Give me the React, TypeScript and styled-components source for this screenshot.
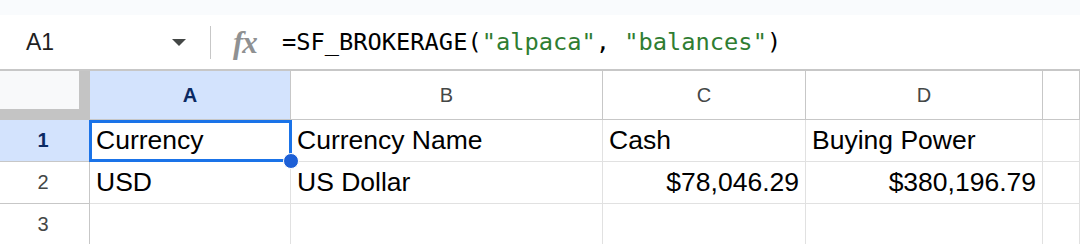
import React from 'react'
import styled, { createGlobalStyle } from 'styled-components'

const GlobalStyle = createGlobalStyle`
    html, body {
        margin: 0;
        padding: 0;
        background: #ffffff;
    }
    body {
        font-family: "Liberation Sans", Arial, sans-serif;
        overflow: hidden;
    }
`

const Page = styled.div`
    width: 1080px;
    height: 244px;
    overflow: hidden;
    background: #ffffff;
`

const TopStrip = styled.div`
    height: 15px;
    background: #f9fbfd;
`

const FormulaBar = styled.div`
    box-sizing: border-box;
    height: 56px;
    display: flex;
    align-items: center;
    border-bottom: 2px solid #c7c7c7;
    background: #ffffff;
`

const NameBox = styled.div`
    box-sizing: border-box;
    width: 186px;
    padding-left: 26px;
    display: flex;
    align-items: center;
    justify-content: space-between;
    font-size: 23px;
    color: #1f1f1f;
`

const Caret = styled.span`
    width: 0;
    height: 0;
    border-left: 7.5px solid transparent;
    border-right: 7.5px solid transparent;
    border-top: 7px solid #444746;
`

const Divider = styled.div`
    width: 1px;
    height: 33px;
    margin-left: 24px;
    background: #c7c7c7;
`

const FxIcon = styled.span`
    width: 30px;
    margin-left: 22px;
    font-family: "Liberation Serif", "Times New Roman", serif;
    font-style: italic;
    font-weight: 700;
    font-size: 31px;
    color: #8f9192;
    letter-spacing: -1px;
    line-height: 1;
`

const Formula = styled.div`
    margin-left: 19px;
    font-family: "DejaVu Sans Mono", "Liberation Mono", monospace;
    font-size: 23.7px;
    color: #000000;
    white-space: pre;
`

const Str = styled.span`
    color: #2f7d32;
`

const GridWrap = styled.div`
    position: relative;
`

const Grid = styled.div`
    display: grid;
    grid-template-columns: 90px 201px 312px 203px 237px 1fr;
    grid-template-rows: 49px 42px 42px 42px;
`

const Corner = styled.div`
    background: #c4c4c4;
`

const CornerInner = styled.div`
    width: 79px;
    height: 38px;
    background: #f8f9fa;
`

const ColHead = styled.div<{ $active?: boolean }>`
    box-sizing: border-box;
    display: flex;
    align-items: center;
    justify-content: center;
    border-right: 1px solid #c7c7c7;
    border-bottom: 1px solid #c7c7c7;
    background: ${p => (p.$active ? '#d3e3fd' : '#ffffff')};
    color: ${p => (p.$active ? '#0b2a63' : '#444746')};
    font-weight: ${p => (p.$active ? 700 : 400)};
    font-size: 20px;
`

const RowHead = styled.div<{ $active?: boolean }>`
    box-sizing: border-box;
    display: flex;
    align-items: center;
    justify-content: center;
    padding-right: 3px;
    border-right: 1px solid #c7c7c7;
    border-bottom: 1px solid #c7c7c7;
    background: ${p => (p.$active ? '#d3e3fd' : '#ffffff')};
    color: ${p => (p.$active ? '#0b2a63' : '#444746')};
    font-weight: ${p => (p.$active ? 700 : 400)};
    font-size: 20px;
`

const Cell = styled.div<{ $right?: boolean }>`
    box-sizing: border-box;
    display: flex;
    align-items: center;
    justify-content: ${p => (p.$right ? 'flex-end' : 'flex-start')};
    padding: 0 6px;
    border-right: 1px solid #e1e1e1;
    border-bottom: 1px solid #e1e1e1;
    font-size: 26.5px;
    color: #000000;
    white-space: nowrap;
    overflow: hidden;
`

const Selection = styled.div`
    position: absolute;
    left: 89px;
    top: 49px;
    width: 203px;
    height: 42px;
    box-sizing: border-box;
    border: 3px solid #1a73e8;
    pointer-events: none;
`

const FillHandle = styled.div`
    position: absolute;
    right: -10px;
    bottom: -10px;
    width: 16px;
    height: 16px;
    box-sizing: border-box;
    border-radius: 50%;
    border: 1.5px solid #ffffff;
    background: #1d5fd6;
`

type Row = { n: number; cells: { text: string; right?: boolean }[] }

const rows: Row[] = [
    { n: 1, cells: [{ text: 'Currency' }, { text: 'Currency Name' }, { text: 'Cash' }, { text: 'Buying Power' }, { text: '' }] },
    { n: 2, cells: [{ text: 'USD' }, { text: 'US Dollar' }, { text: '$78,046.29', right: true }, { text: '$380,196.79', right: true }, { text: '' }] },
    { n: 3, cells: [{ text: '' }, { text: '' }, { text: '' }, { text: '' }, { text: '' }] },
]

const columns = ['A', 'B', 'C', 'D', '']

const App = () => {
    return <>
        <GlobalStyle />
        <Page>
            <TopStrip />
            <FormulaBar>
                <NameBox>
                    <span>A1</span>
                    <Caret />
                </NameBox>
                <Divider />
                <FxIcon>fx</FxIcon>
                <Formula>=SF_BROKERAGE(<Str>"alpaca"</Str>, <Str>"balances"</Str>)</Formula>
            </FormulaBar>
            <GridWrap>
                <Grid>
                    <Corner><CornerInner /></Corner>
                    {columns.map((c, i) => (
                        <ColHead key={i} $active={c === 'A'}>{c}</ColHead>
                    ))}
                    {rows.map(r => (
                        <React.Fragment key={r.n}>
                            <RowHead $active={r.n === 1}>{r.n}</RowHead>
                            {r.cells.map((cell, i) => (
                                <Cell key={i} $right={cell.right}>{cell.text}</Cell>
                            ))}
                        </React.Fragment>
                    ))}
                </Grid>
                <Selection>
                    <FillHandle />
                </Selection>
            </GridWrap>
        </Page>
    </>
}

export default App
